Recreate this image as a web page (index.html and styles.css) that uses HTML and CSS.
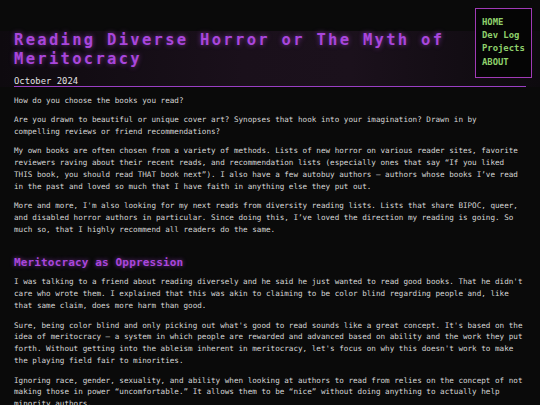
FILE: index.html
```html
<!DOCTYPE html>
<html lang="en">
<head>
<meta charset="utf-8">
<title>Reading Diverse Horror or The Myth of Meritocracy</title>
<link rel="stylesheet" href="styles.css">
</head>
<body>
<nav class="nav">
  <a class="nav-link" href="#">HOME</a>
  <a class="nav-link" href="#">Dev Log</a>
  <a class="nav-link" href="#">Projects</a>
  <a class="nav-link" href="#">ABOUT</a>
</nav>
<main class="page">
  <header class="post-header">
    <h1 class="post-title">Reading Diverse Horror or The Myth of Meritocracy</h1>
    <div class="post-date">October 2024</div>
  </header>
  <article class="post-body">
    <p>How do you choose the books you read?</p>
    <p>Are you drawn to beautiful or unique cover art? Synopses that hook into your imagination? Drawn in by compelling reviews or friend recommendations?</p>
    <p>My own books are often chosen from a variety of methods. Lists of new horror on various reader sites, favorite reviewers raving about their recent reads, and recommendation lists (especially ones that say “If you liked THIS book, you should read THAT book next”). I also have a few autobuy authors — authors whose books I’ve read in the past and loved so much that I have faith in anything else they put out.</p>
    <p>More and more, I'm also looking for my next reads from diversity reading lists. Lists that share BIPOC, queer, and disabled horror authors in particular. Since doing this, I’ve loved the direction my reading is going. So much so, that I highly recommend all readers do the same.</p>
    <h2 class="section-title">Meritocracy as Oppression</h2>
    <p>I was talking to a friend about reading diversely and he said he just wanted to read good books. That he didn't care who wrote them. I explained that this was akin to claiming to be color blind regarding people and, like that same claim, does more harm than good.</p>
    <p>Sure, being color blind and only picking out what's good to read sounds like a great concept. It's based on the idea of meritocracy — a system in which people are rewarded and advanced based on ability and the work they put forth. Without getting into the ableism inherent in meritocracy, let's focus on why this doesn't work to make the playing field fair to minorities.</p>
    <p>Ignoring race, gender, sexuality, and ability when looking at authors to read from relies on the concept of not making those in power “uncomfortable.” It allows them to be “nice” without doing anything to actually help minority authors.</p>
  </article>
</main>
</body>
</html>
```
FILE: styles.css
```css
html, body {
  margin: 0;
  padding: 0;
  background: #0a0a0a;
}

body {
  color: #d6d6d6;
  font-family: "DejaVu Sans Mono", "Liberation Mono", monospace;
}

.page {
  padding: 31px 14px 0 14px;
}

.post-header {
  margin: 0 -14px;
  padding: 0 14px;
  background: linear-gradient(90deg, #0e0a0f 0%, #1a101b 45%, #1b111c 65%, #0d0a0e 100%);
}

.post-title {
  margin: 0;
  font-size: 15.5px;
  line-height: 18.6px;
  letter-spacing: 2.3px;
  font-weight: bold;
  color: #a946dc;
  text-shadow: 0 0 5px rgba(169, 70, 220, 0.65);
}

.post-date {
  margin-top: 8px;
  font-size: 8.9px;
  line-height: 10px;
  color: #e2e2e2;
  border-bottom: 1px solid #9a3fc4;
}

.post-body {
  font-size: 7.62px;
  line-height: 11.9px;
}

.post-body p {
  margin: 7.4px 0;
}

.section-title {
  margin: 21px 0 7.6px 0;
  font-size: 11px;
  line-height: 12px;
  letter-spacing: 0.15px;
  font-weight: bold;
  color: #a946dc;
  text-shadow: 0 0 4px rgba(169, 70, 220, 0.7);
}

.nav {
  position: absolute;
  top: 8px;
  right: 8px;
  width: 43px;
  padding: 6.5px 6px 8px 6px;
  border: 1.5px solid #a03ab6;
  background: #050505;
  display: flex;
  flex-direction: column;
}

.nav-link {
  display: block;
  font-size: 8.9px;
  line-height: 13.4px;
  font-weight: bold;
  color: #8fd16c;
  text-decoration: none;
  white-space: nowrap;
}
```
